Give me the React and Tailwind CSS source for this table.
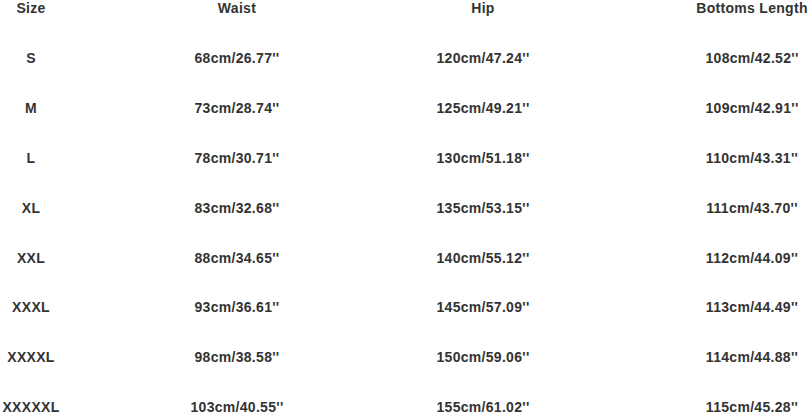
import React from "react";

const rows = [
  ["S", "68cm/26.77''", "120cm/47.24''", "108cm/42.52''"],
  ["M", "73cm/28.74''", "125cm/49.21''", "109cm/42.91''"],
  ["L", "78cm/30.71''", "130cm/51.18''", "110cm/43.31''"],
  ["XL", "83cm/32.68''", "135cm/53.15''", "111cm/43.70''"],
  ["XXL", "88cm/34.65''", "140cm/55.12''", "112cm/44.09''"],
  ["XXXL", "93cm/36.61''", "145cm/57.09''", "113cm/44.49''"],
  ["XXXXL", "98cm/38.58''", "150cm/59.06''", "114cm/44.88''"],
  ["XXXXXL", "103cm/40.55''", "155cm/61.02''", "115cm/45.28''"],
];

function Row({ cells, className }) {
  return (
    <div className={"grid grid-cols-[62px_350px_142px_1fr] " + className}>
      <div className="text-center whitespace-nowrap">{cells[0]}</div>
      <div className="text-center whitespace-nowrap">{cells[1]}</div>
      <div className="text-center whitespace-nowrap">{cells[2]}</div>
      <div className="pl-[137px]">
        <div className="w-[122px] text-center whitespace-nowrap">{cells[3]}</div>
      </div>
    </div>
  );
}

export default function App() {
  return (
    <div
      className="w-[811px] h-[416px] overflow-hidden bg-white text-[#333333] text-[14px] font-bold leading-[16px] tracking-[0.3px]"
      style={{ fontFamily: '"Liberation Sans", Arial, sans-serif' }}
    >
      <Row cells={["Size", "Waist", "Hip", "Bottoms Length"]} className="h-[33px] items-start" />
      {rows.map((r) => (
        <Row key={r[0]} cells={r} className="h-[49.9px] items-center" />
      ))}
    </div>
  );
}
